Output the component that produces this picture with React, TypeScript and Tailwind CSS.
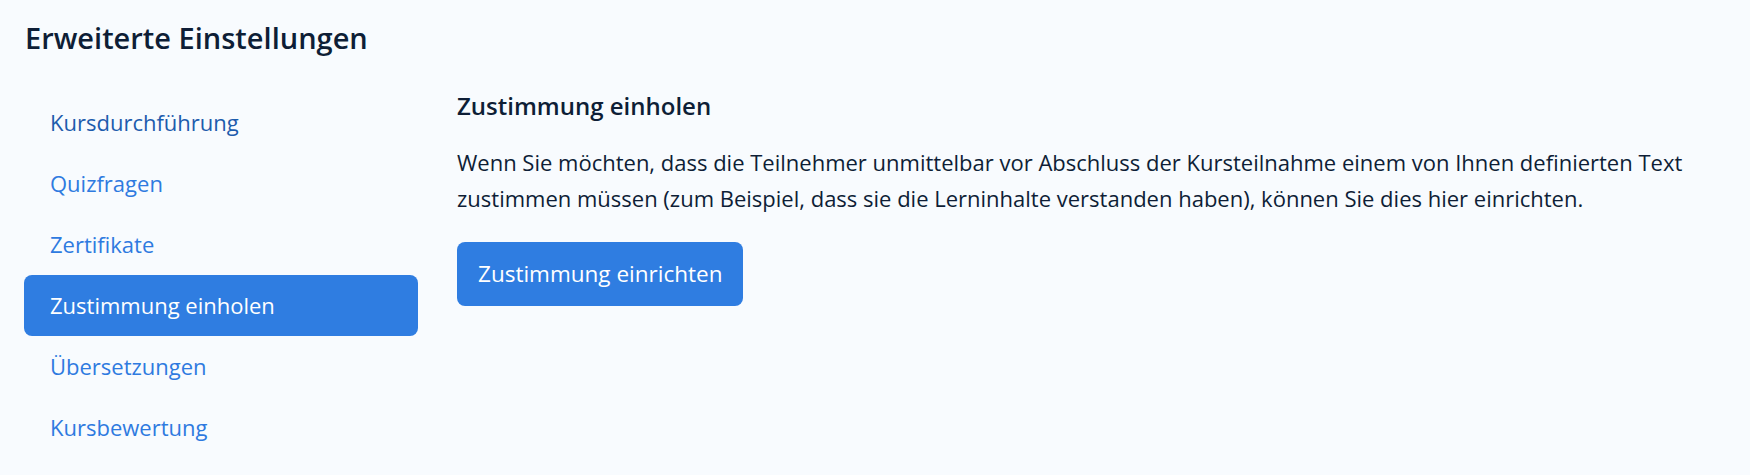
const NAV = [
  { label: 'Kursdurchführung', tone: 'text-[#1d5cad]' },
  { label: 'Quizfragen', tone: 'text-[#2e7ae0]' },
  { label: 'Zertifikate', tone: 'text-[#2e7ae0]' },
  { label: 'Zustimmung einholen', active: true },
  { label: 'Übersetzungen', tone: 'text-[#2e7ae0]' },
  { label: 'Kursbewertung', tone: 'text-[#2e7ae0]' },
];

export default function App() {
  return (
    <div
      className="w-[1750px] h-[475px] bg-[#f8fbfe] text-[#0e1e36] overflow-hidden"
      style={{ fontFamily: '"Open Sans", "Noto Sans", sans-serif' }}
    >
      <h1 className="pl-[25px] pt-[18px] text-[29px] leading-[40px] font-semibold">Erweiterte Einstellungen</h1>

      <div className="flex pt-[34px]">
        {/* Sidebar */}
        <nav className="ml-[24px] w-[394px] flex flex-col">
          {NAV.map(item => (
            <a
              key={item.label}
              href="#"
              className={`h-[61px] flex items-center pl-[26px] rounded-lg text-[22px] ${
                item.active ? 'bg-[#2f7de1] text-white' : item.tone
              }`}
            >
              {item.label}
            </a>
          ))}
        </nav>

        {/* Content */}
        <div className="ml-[39px] flex flex-col items-start">
          <h2 className="text-[24px] leading-[30px] font-semibold mt-[-1px]">Zustimmung einholen</h2>
          <p className="mt-[23px] text-[22px] leading-[36px] w-[1280px]">
            Wenn Sie möchten, dass die Teilnehmer unmittelbar vor Abschluss der Kursteilnahme einem von Ihnen definierten Text
            <br />
            zustimmen müssen (zum Beispiel, dass sie die Lerninhalte verstanden haben), können Sie dies hier einrichten.
          </p>
          <button className="mt-[26px] h-[64px] px-[21px] rounded-lg bg-[#2f7de1] text-white text-[22.5px]">
            Zustimmung einrichten
          </button>
        </div>
      </div>
    </div>
  );
}
